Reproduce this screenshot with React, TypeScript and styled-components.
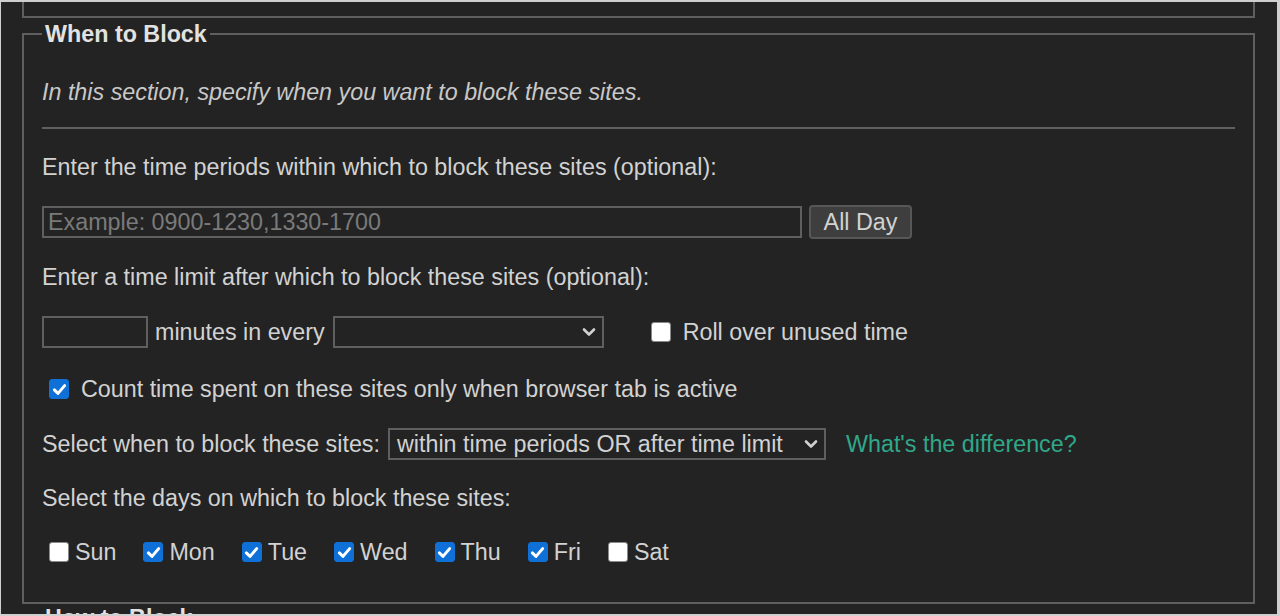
import { FC } from 'react';
import styled, { createGlobalStyle } from 'styled-components';

const COLOR_BG = '#232323';
const COLOR_LINE = '#5f5f5f';
const COLOR_TEXT = '#d2d2d2';
const COLOR_BLUE = '#0f71d8';

const GlobalStyle = createGlobalStyle`
  body {
    margin: 0;
    background: #cfcfcf;
    font-family: 'Liberation Sans', Arial, sans-serif;
    font-size: 23.3px;
    color: ${COLOR_TEXT};
  }
`;

type CheckBoxProps = { checked: boolean; label: string };

const CheckBox: FC<CheckBoxProps> = ({ checked, label }) => (
  <CheckLabel>
    <HiddenInput type="checkbox" defaultChecked={checked} />
    <Box checked={checked}>
      {checked && (
        <svg width="15" height="15" viewBox="0 0 14 14">
          <path d="M2.2 7.4 L5.6 10.6 L11.8 3.4" fill="none" stroke="#fff" strokeWidth="2.8" strokeLinecap="round" strokeLinejoin="round" />
        </svg>
      )}
    </Box>
    <span>{label}</span>
  </CheckLabel>
);

const Chevron: FC = () => (
  <ChevronIcon width="14" height="10" viewBox="0 0 14 10">
    <path d="M2 2.5 L7 7.5 L12 2.5" fill="none" stroke="#d0d0d0" strokeWidth="2.6" strokeLinecap="round" strokeLinejoin="round" />
  </ChevronIcon>
);

const DAYS: [string, boolean][] = [
  ['Sun', false],
  ['Mon', true],
  ['Tue', true],
  ['Wed', true],
  ['Thu', true],
  ['Fri', true],
  ['Sat', false],
];

export default function App() {
  return (
    <>
      <GlobalStyle />
      <Page>
        <PrevFieldset />
        <Fieldset>
          <Legend>When to Block</Legend>
          <Description>In this section, specify when you want to block these sites.</Description>
          <Rule />
          <Rows>
            <Row>Enter the time periods within which to block these sites (optional):</Row>
            <Row>
              <TextInput width={760} placeholder="Example: 0900-1230,1330-1700" />
              <Button>All Day</Button>
            </Row>
            <Row>Enter a time limit after which to block these sites (optional):</Row>
            <Row>
              <TextInput width={106} />
              <Text>minutes in every</Text>
              <SelectWrap width={271}>
                <Select defaultValue="">
                  <option value=""></option>
                </Select>
                <Chevron />
              </SelectWrap>
              <Spacer width={47} />
              <CheckBox checked={false} label="Roll over unused time" />
            </Row>
            <Row indent shift={2}>
              <CheckBox checked label="Count time spent on these sites only when browser tab is active" />
            </Row>
            <Row>
              <Text>Select when to block these sites:</Text>
              <SelectWrap width={438}>
                <Select defaultValue="or">
                  <option value="or">within time periods OR after time limit</option>
                </Select>
                <Chevron />
              </SelectWrap>
              <Link href="#">What's the difference?</Link>
            </Row>
            <Row shift={-1}>Select the days on which to block these sites:</Row>
            <Row shift={-1}>
              {DAYS.map(([day, on]) => (
                <Day key={day}>
                  <CheckBox checked={on} label={day} />
                </Day>
              ))}
            </Row>
          </Rows>
        </Fieldset>
        <NextFieldset>
          <Legend>How to Block</Legend>
        </NextFieldset>
      </Page>
    </>
  );
}

const Page = styled.div`
  margin: 2px 3px 0 1px;
  height: 612px;
  overflow: hidden;
  background: ${COLOR_BG};
  padding: 0 22px 0 21px;
`;

const PrevFieldset = styled.div`
  height: 14px;
  border: 2px solid ${COLOR_LINE};
  border-top: none;
`;

const Fieldset = styled.fieldset`
  margin: 3px 0 0;
  min-width: 0;
  border: 2px solid ${COLOR_LINE};
  padding: 0 18px 33px;
`;

const NextFieldset = styled(Fieldset)`
  padding-bottom: 40px;
  margin-top: 1px;
`;

const Legend = styled.legend`
  padding: 0 3px;
  font-weight: bold;
  line-height: 26px;
  color: #e2e2e2;
`;

const Description = styled.p`
  margin: 32px 0 0;
  line-height: 26px;
  font-style: italic;
  color: #c8c8c8;
`;

const Rule = styled.hr`
  margin: 22px 0 0;
  border: none;
  height: 2px;
  background: ${COLOR_LINE};
`;

const Rows = styled.div`
  display: flex;
  flex-direction: column;
  gap: 21px;
  margin-top: 21px;
`;

const Row = styled.div<{ indent?: boolean; shift?: number }>`
  display: flex;
  align-items: center;
  height: 34px;
  line-height: 26px;
  white-space: nowrap;
  padding-left: ${({ indent }) => (indent ? 7 : 0)}px;
  margin-top: ${({ shift }) => shift ?? 0}px;
`;

const Text = styled.span`
  margin: 0 8px 0 7px;

  &:first-child {
    margin-left: 0;
  }
`;

const TextInput = styled.input<{ width: number }>`
  box-sizing: border-box;
  width: ${({ width }) => width}px;
  height: 32px;
  padding: 0 4px;
  background: ${COLOR_BG};
  border: 2px solid ${COLOR_LINE};
  color: ${COLOR_TEXT};
  font: inherit;
  outline: none;

  &::placeholder {
    color: #7a7a7a;
  }
`;

const Button = styled.button`
  box-sizing: border-box;
  margin-left: 7px;
  width: 103px;
  height: 34px;
  background: #3e3e3e;
  border: 2px solid #575757;
  border-radius: 4px;
  color: ${COLOR_TEXT};
  font: inherit;
  padding: 0;
`;

const SelectWrap = styled.div<{ width: number }>`
  position: relative;
  width: ${({ width }) => width}px;
  height: 32px;
`;

const Select = styled.select`
  box-sizing: border-box;
  appearance: none;
  width: 100%;
  height: 100%;
  padding: 0 30px 0 7px;
  background: ${COLOR_BG};
  border: 2px solid ${COLOR_LINE};
  border-radius: 0;
  color: ${COLOR_TEXT};
  font: inherit;
  outline: none;
`;

const ChevronIcon = styled.svg`
  position: absolute;
  right: 8px;
  top: 11px;
  pointer-events: none;
`;

const Spacer = styled.span<{ width: number }>`
  flex: none;
  width: ${({ width }) => width}px;
`;

const Link = styled.a`
  margin-left: 20px;
  color: #2fa88a;
  text-decoration: none;
`;

const CheckLabel = styled.label`
  display: flex;
  align-items: center;
  gap: 12px;
`;

const Day = styled.div`
  padding-left: 7px;
  margin-right: 20px;

  ${CheckLabel} {
    gap: 6px;
  }
`;

const HiddenInput = styled.input`
  position: absolute;
  width: 1px;
  height: 1px;
  margin: 0;
  opacity: 0;
  overflow: hidden;
`;

const Box = styled.span<{ checked: boolean }>`
  box-sizing: border-box;
  display: flex;
  align-items: center;
  justify-content: center;
  flex: none;
  width: 20px;
  height: 20px;
  border-radius: 3px;
  background: ${({ checked }) => (checked ? COLOR_BLUE : '#ffffff')};
  border: ${({ checked }) => (checked ? `1px solid ${COLOR_BLUE}` : '1px solid #8a8a8a')};
`;
